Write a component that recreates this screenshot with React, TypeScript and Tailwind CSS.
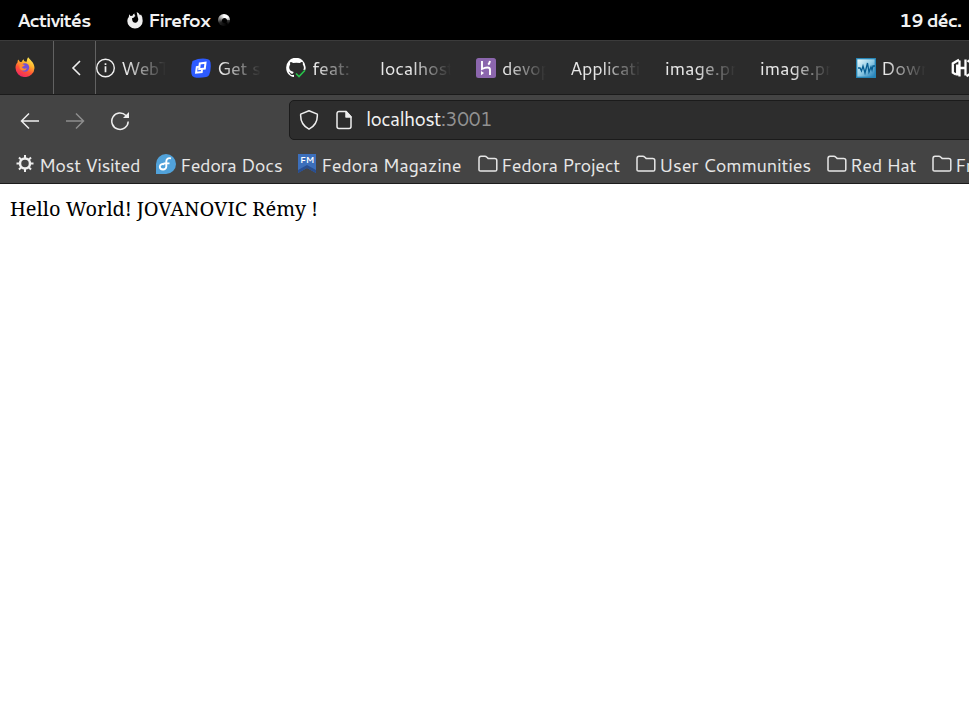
import type { ReactNode } from "react";

const Folder = () => (
  <svg width="20" height="20" viewBox="0 0 20 20" fill="none" stroke="#e6e6e6" strokeWidth="1.5" className="-mr-px shrink-0">
    <path d="M1 16V4.500C1 3 2 2.300 3 2.300h3.800c1 0 1.500.3 2.100.9l1.200 1.200h6.600c1.400 0 2.100.8 2.100 2v9c0 1-.5 1.600-1.500 1.600H2.500C1.500 17 1 16.800 1 16Z" />
  </svg>
);

const FirefoxLogo = () => (
  <svg width="20" height="20" viewBox="0 0 20 20" className="shrink-0">
    <defs>
      <linearGradient id="flame" x1="0.8" y1="0" x2="0.3" y2="1">
        <stop offset="0" stopColor="#fff05a" />
        <stop offset="0.35" stopColor="#ffb32d" />
        <stop offset="0.65" stopColor="#ff5534" />
        <stop offset="1" stopColor="#ee2467" />
      </linearGradient>
    </defs>
    <path d="M3.300 2.500 5 5l2-.2c.2-1.200.8-2 1.800-2.500-.1 1 .2 1.600 1 2.100l1.900.3C12 2.700 12.400 1.100 13.200.300c1 1.600 2.300 2.300 3.200 3.700 1.600 1.500 3.100 4.100 3.100 7A9.500 9.300 0 1 1 .5 10.500C.5 8 1.500 6.500 2.500 5.500c0-1.200.2-2.200.8-3Z" fill="url(#flame)" />
    <circle cx="10" cy="10.500" r="4.200" fill="#7550d8" />
    <path d="M4.500 7c2-.8 3.500.7 5.300 1-.5 1.700-2.400 1.200-3 2.300 1.700 1.700 3.200 1.600 5 .7-.6 3-5.500 3.800-7.200.2Z" fill="#ff8b31" />
  </svg>
);

const Info = () => (
  <svg width="20" height="20" viewBox="0 0 20 20" fill="none" stroke="#f0f0f0" className="shrink-0">
    <circle cx="9.500" cy="10" r="8.800" strokeWidth="1.400" />
    <path d="M9.500 8.300v6M9.500 5.200v1.800" strokeWidth="1.700" />
  </svg>
);

const Squares = () => (
  <svg width="20" height="20" viewBox="0 0 20 20" className="shrink-0">
    <path d="M1.500 3Q10-.8 17 1.200q2 .7 2.500 3 1 7-1.300 12.500-.8 1.800-3 2.300-7 1.500-12 .3Q.8 18.500.5 16q-1-7 1-13Z" fill="#2d5bff" />
    <g fill="none" stroke="white" strokeWidth="2">
      <path d="m8.800 5.500 5.700-.8-.7 5.800-5.600.7Z" />
      <path d="m8 8.800-2.200.3-.7 5.600 5.600-.7.300-2.500" />
    </g>
  </svg>
);

const GitHubPassed = () => (
  <svg width="20" height="20" viewBox="0 0 20 20" className="shrink-0">
    <path d="M8 19C3.200 18.200.2 14.600.2 9.900A9.700 9.700 0 0 1 19.600 9q.1 1.500-.2 2.800l-2 .1c.8-1.900.6-4.100-.6-5.500.2-.9 0-1.800-.3-2.400-1 0-2.100.6-2.800 1.100a13 13 0 0 0-6.600 0C6.300 4.500 5.400 4 4.400 4c-.4.900-.4 1.700-.2 2.500C2 9.700 3.500 13.400 7.700 13.900l-.8 1.600c-1 .5-2 .2-2.700-.8-.5-.8-1-.9-1.500-.8 1 .5 1.200 2 2 2.500.8.600 2 .6 3.300.3Z" fill="white" />
    <path d="m10 15.500 3 3.100 6-6.300" fill="none" stroke="#28c34b" strokeWidth="1.600" />
  </svg>
);

const Heroku = () => (
  <svg width="20" height="20" viewBox="0 0 20 20" className="shrink-0">
    <rect width="20" height="20" rx="2.500" fill="#8b66ad" />
    <path d="M6 3v8c3.500-1.800 8-2.500 8 .7V17M14 3c-.3 1.500-.8 2.700-1.800 3.700" fill="none" stroke="white" strokeWidth="1.900" />
    <path d="m5 13 3 2-3 2.300Z" fill="white" />
  </svg>
);

const WaveMonitor = () => (
  <svg width="20" height="20" viewBox="0 0 20 20" className="shrink-0">
    <defs><linearGradient id="monitor" x2="1" y2="1"><stop stopColor="#f3ffff" /><stop offset=".5" stopColor="#91cce5" /><stop offset="1" stopColor="#1978b3" /></linearGradient></defs>
    <rect x=".7" y=".7" width="18.600" height="18.600" fill="url(#monitor)" stroke="#2588bb" strokeWidth="1.300" />
    <path d="M2 10h2l1.500 3L7 8l2 7 2.500-10L13 14l2-5 1 3 1-4h2" fill="none" stroke="#075d91" strokeWidth="1.300" />
  </svg>
);

const HashiCorp = () => (
  <svg width="20" height="20" viewBox="0 0 20 20" fill="none" stroke="white" strokeWidth="2.300" className="shrink-0">
    <path d="M8 1.800 1.800 5.400v9.300L5 16.500M6.200 6.500v11M8.500 18.500v-16M8.500 10h6M14.500 1.500v16M16.500 2.500l4 2.300M15.500 18.200l5-3" />
  </svg>
);

const Tab = ({ icon, children, spacing = "tracking-[-0.200px]" }: { icon?: ReactNode; children: ReactNode; spacing?: string }) => (
  <div className="flex h-full w-[95px] shrink-0 items-center gap-[6px]">
    {icon}
    <div className={"mr-[25px] min-w-0 flex-1 overflow-hidden whitespace-nowrap text-[18.200px] leading-6 [mask-image:linear-gradient(to_left,transparent_0,black_40px)] " + spacing}>{children}</div>
  </div>
);

const Bookmark = ({ icon, children, layout }: { icon: ReactNode; children: ReactNode; layout: string }) => (
  <div className={"flex h-full shrink-0 items-center gap-1 whitespace-nowrap " + layout}>
    {icon}
    <span className="pt-px text-[18.200px] leading-6">{children}</span>
  </div>
);

export default function App() {
  return (
    <div className="flex h-[718px] w-[969px] flex-col overflow-hidden bg-white font-['Cantarell','Noto_Sans',sans-serif] text-[#e7e7e7]">
      <header className="flex h-10 shrink-0 items-center bg-black pl-[17px] pr-[8px] text-[18px] font-bold text-[#f2f2f2]">
        <span className="w-[110px] tracking-[-1.050px]">Activités</span>
        <svg width="16" height="17" viewBox="0 0 16 17" className="mr-[5px] shrink-0"><path d="M2.200 2.300 3.500 4l2-.3Q6 2 7.500 1.500q-.3 1.800 1 2.500-1 .3-1.500 1.500l-2 .8q.2 5 4 4.500Q12.500 9 10.500 4.500L9.700 0Q12 1 13 3.200l1-.8Q16 5 15.700 9A7.700 7.500 0 0 1 .3 9q0-2.700 1.500-4Z" fill="#eee" /></svg>
        <span className="w-[70px] tracking-[-1px]">Firefox</span>
        <div className="flex size-[12px] shrink-0 items-center justify-center rounded-full bg-[conic-gradient(from_90deg,#444,#000_15%,#222_40%,#aaa_60%,#fff_75%,#fff_90%,#aaa)]"><i className="size-[5px] rounded-full bg-black" /></div>
        <span className="ml-auto tracking-[-1px]">19 déc.</span>
      </header>

      <nav className="flex h-[55px] shrink-0 overflow-hidden border-t border-b border-t-[#3b3b3b] border-b-[#1b1b1b] bg-[#2b2b2b]">
        <div className="flex w-[54px] shrink-0 items-center border-r border-[#626262] pb-[2px] pl-[15px]"><FirefoxLogo /></div>
        <div className="flex w-[42px] shrink-0 items-center border-r border-[#626262] pl-[17px]">
          <svg width="10" height="16" viewBox="0 0 10 16" fill="none" stroke="#eee" strokeWidth="1.600"><path d="M9 1 2 8l7 7" /></svg>
        </div>
        <div className="-ml-px flex min-w-0 flex-1 overflow-hidden pl-px">
          <Tab icon={<Info />} spacing="-ml-px tracking-[-0.600px]">WebT</Tab>
          <Tab icon={<Squares />}>Get s</Tab>
          <Tab icon={<GitHubPassed />}>feat: l</Tab>
          <Tab spacing="-ml-px tracking-[-0.300px]">localhost</Tab>
          <Tab icon={<Heroku />} spacing="tracking-[-0.350px]">devop</Tab>
          <Tab spacing="-ml-px tracking-[-0.300px]">Applicati</Tab>
          <Tab spacing="-ml-px">image.pn</Tab>
          <Tab spacing="-ml-px">image.pn</Tab>
          <Tab icon={<WaveMonitor />} spacing="-ml-px">Down</Tab>
          <Tab icon={<HashiCorp />}>{null}</Tab>
        </div>
      </nav>

      <section className="flex h-[50px] shrink-0 items-center overflow-hidden bg-[#444] pl-[20px]">
        <svg width="20" height="18" viewBox="0 0 20 18" fill="none" stroke="#eee" strokeWidth="1.500" className="mr-[25px] mt-px shrink-0"><path d="M9 1.500 1.500 9 9 16.500M1.500 9h17.500" /></svg>
        <svg width="20" height="18" viewBox="0 0 20 18" fill="none" stroke="#8d8d8d" strokeWidth="1.500" className="mr-[25px] mt-px shrink-0"><path d="m11 1.500 7.500 7.500-7.500 7.500M18.500 9H1" /></svg>
        <svg width="20" height="20" viewBox="0 0 20 20" fill="none" stroke="#eee" strokeWidth="1.500" className="mr-[159px] mt-[2px] shrink-0"><path d="M18.200 10.500a8.200 8.200 0 1 1-2.300-6L17 6" /><path d="M19 1v6h-6Z" fill="#eee" stroke="none" /></svg>
        <div className="flex h-10 w-[690px] shrink-0 items-center rounded-l-[5px] border border-[#1b1b1b] bg-[#2d2d2d] pl-[9px]">
          <svg width="20" height="20" viewBox="0 0 20 20" fill="none" stroke="#eee" strokeWidth="1.500" strokeLinejoin="round" className="mr-[17px]"><path d="m10 .8 8.300 3.300c.4 5.500-1.600 11.500-8.300 15.100C3.300 15.600 1.300 9.600 1.700 4.100Z" /></svg>
          <svg width="17" height="20" viewBox="0 0 17 20" fill="none" stroke="#eee" strokeWidth="1.500" strokeLinejoin="round" className="mr-[13px]"><path d="M3 1.500h7l5 5.500v9.500a2 2 0 0 1-2 2H3a2 2 0 0 1-2-2v-13a2 2 0 0 1 2-2Z" /><path d="M10 1.500V7h5Z" fill="#eee" /></svg>
          <span className="pb-[2px] text-[19.300px] tracking-[-0.700px] text-[#f2f2f2]">localhost<span className="text-[#929292]">:3001</span></span>
        </div>
      </section>

      <nav className="flex h-[39px] shrink-0 overflow-hidden border-b border-[#1c1c1c] bg-[#444] pl-[15px]">
        <Bookmark layout="w-[141px] tracking-[-0.440px]" icon={<svg width="20" height="20" viewBox="0 0 20 20" fill="none" stroke="#eee"><path d="M10 1v17M1.500 9.500h17M4 3.500l12 12M16 3.500l-12 12" strokeWidth="2" /><circle cx="10" cy="9.500" r="5" strokeWidth="2.500" fill="#444" /></svg>}>Most Visited</Bookmark>
        <Bookmark layout="w-[141px] tracking-[-0.400px]" icon={<svg width="20" height="20" viewBox="0 0 20 20"><path d="M0 20V10a10 10 0 1 1 10 10Z" fill="#51a2da" /><path d="M15 4.400c-3-.8-4.700.5-4.700 3.200v5c0 4-6.500 3.600-6.500.2 0-2.500 2.600-3.400 4.600-2.500M7.500 9.400h6" fill="none" stroke="white" strokeWidth="1.900" /></svg>}>Fedora Docs</Bookmark>
        <Bookmark layout="w-[181px] tracking-[-0.280px]" icon={<svg width="20" height="20" viewBox="0 0 20 20"><path d="M1 0h18v19l-9-5-9 5Z" fill="#3666b2" /><path d="M1 12.500V19l9-5 9 5v-6.500L10 9Z" fill="#294f91" /><path d="M1 0h18v16l-9-5-9 5Z" fill="#3c6fbb" /><text x="3" y="9" fill="white" fontSize="8.500" fontWeight="bold" textLength="14">FM</text></svg>}>Fedora Magazine</Bookmark>
        <Bookmark layout="w-[158px] tracking-[-0.350px]" icon={<Folder />}>Fedora Project</Bookmark>
        <Bookmark layout="w-[191px] tracking-[-0.200px]" icon={<Folder />}>User Communities</Bookmark>
        <Bookmark layout="w-[105px] tracking-[-0.400px]" icon={<Folder />}>Red Hat</Bookmark>
        <Bookmark layout="w-[120px] tracking-[-0.250px]" icon={<Folder />}>Fr</Bookmark>
      </nav>
      <main className="flex-1 bg-white px-[10px] pt-[11px] font-['Noto_Serif','DejaVu_Serif_Condensed','DejaVu_Serif',serif] text-[20px] leading-7 text-black">Hello World! JOVANOVIC Rémy !</main>
    </div>
  );
}
